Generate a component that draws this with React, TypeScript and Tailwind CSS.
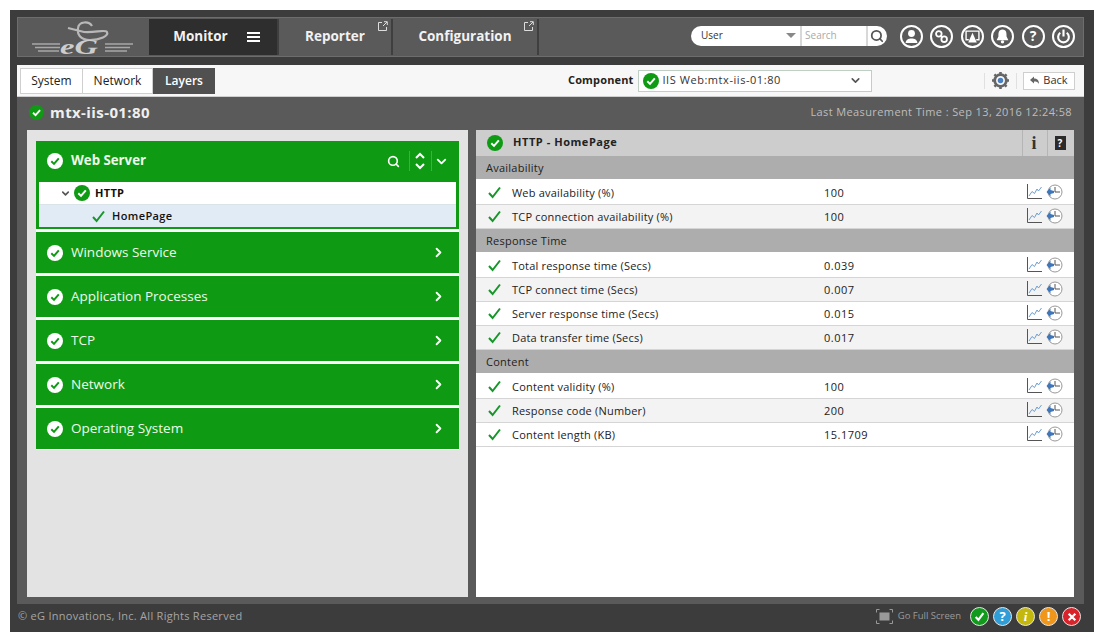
import { ChevronDown, ChevronRight, Search } from "lucide-react";

const font = "font-['Open_Sans','Noto_Sans',sans-serif]";

function CheckCircle({ size = 16, bg = "#0f9a14", fg = "#fff" }: { size?: number; bg?: string; fg?: string }) {
  return (
    <svg width={size} height={size} viewBox="0 0 16 16" className="shrink-0">
      <circle cx="8" cy="8" r="8" fill={bg} />
      <path d="M4.3 8.3 L7 10.9 L11.8 5.4" fill="none" stroke={fg} strokeWidth="2" />
    </svg>
  );
}

function Tick() {
  return (
    <svg width="13" height="13" viewBox="0 0 13 13" className="shrink-0">
      <path d="M1 7 L4.6 11 L12 1.5" fill="none" stroke="#16962a" strokeWidth="2" />
    </svg>
  );
}

function PopOut() {
  return (
    <svg width="10" height="10" viewBox="0 0 10 10" className="absolute right-[3px] top-[2px]">
      <path d="M4 1.5 H0.5 V9.5 H8.5 V6" fill="none" stroke="#ddd" strokeWidth="1" />
      <path d="M5 5 L9 1 M6 0.7 H9.3 V4" fill="none" stroke="#ddd" strokeWidth="1" />
    </svg>
  );
}

function Logo() {
  return (
    <div className="relative w-[131px] h-full shrink-0">
      <svg width="131" height="38" viewBox="0 0 131 38" className="absolute left-0 top-0">
        <path d="M14 25 H42 M17 28.5 H42 M20 32 H41 M87 25 H115 M87 28.5 H112 M87 32 H109" stroke="#a8a8a8" strokeWidth="1.3" />
        <path d="M74 7 C71 2 61 2 60 9 C59 15 62 21 72 21 C82 21 91 17 89 13 C87 10 77 14 66 13 L50 9" fill="none" stroke="#b8b8b8" strokeWidth="2.2" />
      </svg>
      <span className="absolute left-[42px] top-[20px] origin-left scale-x-[1.55] font-['Liberation_Serif',serif] italic font-bold text-[21px] leading-[17px] text-[#cdcdcd]">eG</span>
    </div>
  );
}

function TopTab({ label, active, pop, w }: { label: string; active?: boolean; pop?: boolean; w: string }) {
  return (
    <div className={`relative h-full flex items-center justify-center border-r-2 border-[#3f3f3f] pb-[1px] ${w} ${active ? "bg-[#2e2e2e] pl-[7px]" : ""}`}>
      <span className="text-[13.5px] font-bold text-[#f2f2f2]">{label}</span>
      {active && (
        <span className="ml-[19px] flex flex-col gap-[2px]">
          <span className="block w-[13px] h-[2px] bg-white" />
          <span className="block w-[13px] h-[2px] bg-white" />
          <span className="block w-[13px] h-[2px] bg-white" />
        </span>
      )}
      {pop && <PopOut />}
    </div>
  );
}

function RoundIcon({ children }: { children: React.ReactNode }) {
  return (
    <div className="w-[23px] h-[23px] rounded-full border-2 border-white flex items-center justify-center shrink-0">
      <svg width="15" height="15" viewBox="0 0 14 14">{children}</svg>
    </div>
  );
}

function Accordion({ label }: { label: string }) {
  return (
    <div className="h-[41px] bg-[#0f9a14] flex items-center pl-[11px] pr-[13px]">
      <CheckCircle bg="#fff" fg="#0f9a14" />
      <span className="ml-[8px] text-[13.5px] font-medium text-[#eefbe9] flex-1">{label}</span>
      <ChevronRight size={15} strokeWidth={3} className="text-white" />
    </div>
  );
}

function Metric({ label, value, alt }: { label: string; value: string; alt?: boolean }) {
  return (
    <div className={`h-[24px] flex items-center border-b border-[#d5d5d5] pl-[12px] pr-[11px] text-[11px] text-[#222] ${alt ? "bg-[#f3f3f3]" : "bg-white"}`}>
      <Tick />
      <span className="ml-[11px] pt-[1px] w-[312px] tracking-[0.2px]">{label}</span>
      <span className="flex-1 pt-[1px] tracking-[0.5px]">{value}</span>
      <div className="flex items-center -mt-[2px]">
        <svg width="15" height="15" viewBox="0 0 15 15" className="shrink-0">
          <path d="M0.5 0 V14.5 H15" fill="none" stroke="#555" strokeWidth="1" />
          <path d="M2 12 L5 7.5 L7.5 9.5 L10 5 L11.5 7 L14.5 3" fill="none" stroke="#6f9ed0" strokeWidth="1" />
        </svg>
        <svg width="17" height="16" viewBox="0 0 17 16" className="ml-[4px] shrink-0">
          <circle cx="9" cy="8" r="7" fill="#fff" stroke="#999" strokeWidth="1" />
          <path d="M9 3 V8 H14" fill="none" stroke="#555" strokeWidth="1" />
          <path d="M0.5 8 L4.5 3.5 V6 L8 7 V9 L4.5 10 V12.5 Z" fill="#3f76ba" />
        </svg>
      </div>
    </div>
  );
}

function Section({ label }: { label: string }) {
  return (
    <div className="h-[25px] bg-[#adadad] border-b-2 border-white flex items-center pt-[2px] pl-[10px] text-[11px] text-[#222] tracking-[0.25px]">
      {label}
    </div>
  );
}

function StatusDot({ bg, children }: { bg: string; children: React.ReactNode }) {
  return (
    <span className={`w-[19px] h-[19px] rounded-full border border-[#e8e8e8] flex items-center justify-center text-[13px] font-bold text-white ${bg}`}>
      {children}
    </span>
  );
}

export default function App() {
  return (
    <div className={`w-[1103px] h-[642px] bg-white pl-[10px] pr-[9px] pt-[10px] pb-[10px] ${font}`}>
      <div className="h-full bg-[#3c3c3c] flex flex-col">
        {/* top nav */}
        <div className="mt-[7px] mx-[7px] mr-[10px] h-[40px] bg-[#5a5a5a] border border-[#6d6d6d] flex items-stretch py-[1px]">
          <Logo />
          <TopTab label="Monitor" active w="w-[130px]" />
          <TopTab label="Reporter" pop w="w-[114px]" />
          <TopTab label="Configuration" pop w="w-[146px]" />
          <div className="flex-1 flex items-center justify-end pr-[8px] pb-[2px]">
            <div className="w-[196px] h-[20px] -mt-[1px] bg-white rounded-full flex items-center text-[10px]">
              <span className="ml-[10px] flex-1 text-[#333]">User</span>
              <span className="w-0 h-0 border-x-[5px] border-x-transparent border-t-[5px] border-t-[#888] mr-[4px]" />
              <span className="w-[68px] h-full border-x-2 border-[#d8d8d8] pl-[3px] leading-[19px] text-[#aaa]">Search</span>
              <Search size={14} strokeWidth={3} className="ml-[2px] mr-[3px] text-[#555]" />
            </div>
            <div className="ml-[13px] flex gap-[7.4px]">
              <RoundIcon>
                <circle cx="7" cy="4.2" r="3.2" fill="#fff" />
                <path d="M1.5 13 C1.5 7.5 12.5 7.5 12.5 13 Z" fill="#fff" />
              </RoundIcon>
              <RoundIcon>
                <circle cx="4.5" cy="4.5" r="2.6" fill="none" stroke="#fff" strokeWidth="1.7" />
                <circle cx="9.5" cy="9.5" r="2.6" fill="none" stroke="#fff" strokeWidth="1.7" />
                <path d="M6 6 L8 8" stroke="#fff" strokeWidth="1.7" />
              </RoundIcon>
              <RoundIcon>
                <path d="M3.5 10 H1 V2 H13 V10 H10.5" fill="none" stroke="#fff" strokeWidth="1.3" />
                <path d="M7 3.5 L11 12.5 H3 Z" fill="#fff" />
              </RoundIcon>
              <RoundIcon>
                <path d="M7 0.5 C3.2 0.5 3.2 4 3.2 7 L1.5 10.5 H12.5 L10.8 7 C10.8 4 10.8 0.5 7 0.5 Z" fill="#fff" />
                <circle cx="7" cy="12" r="1.6" fill="#fff" />
              </RoundIcon>
              <div className="w-[23px] h-[23px] rounded-full border-2 border-white flex items-center justify-center text-[14px] font-bold text-white leading-none">?</div>
              <RoundIcon>
                <path d="M4 3.5 A5 5 0 1 0 10 3.5" fill="none" stroke="#fff" strokeWidth="2" />
                <path d="M7 0.5 V7" stroke="#fff" strokeWidth="2" />
              </RoundIcon>
            </div>
          </div>
        </div>

        {/* tab bar */}
        <div className="mt-[8px] mx-[7px] mr-[10px] h-[32px] bg-[#f7f7f7] flex items-center pl-[3px] pr-[9px] border-b border-[#cfcfcf]">
          <div className="flex h-[26px] text-[12px]">
            <span className="w-[63px] border border-[#cfcfcf] bg-white flex items-center justify-center text-[#222]">System</span>
            <span className="w-[70px] border-y border-r border-[#cfcfcf] bg-white flex items-center justify-center text-[#222]">Network</span>
            <span className="w-[62px] bg-[#505050] flex items-center justify-center font-semibold text-white">Layers</span>
          </div>
          <span className="ml-[353px] text-[11px] font-bold text-[#222] tracking-[0.15px]">Component</span>
          <div className="ml-[5px] w-[234px] h-[22px] bg-white border border-[#bfcfc4] flex items-center pl-[4px] pr-[9px] text-[11px] text-[#333]">
            <CheckCircle />
            <span className="ml-[3px] flex-1 tracking-[0.55px]">IIS Web:mtx-iis-01:80</span>
            <ChevronDown size={13} strokeWidth={3} className="text-[#555]" />
          </div>
          <div className="ml-auto flex items-center">
            <div className="h-[16px] w-[33px] border-x border-[#e0e0e0] flex items-center justify-center">
              <svg width="17" height="17" viewBox="0 0 16 16">
                <circle cx="8" cy="8" r="5.5" fill="none" stroke="#666" strokeWidth="2.6" />
                <path d="M8 0 V3 M8 13 V16 M0 8 H3 M13 8 H16 M2.3 2.3 L4.4 4.4 M11.6 11.6 L13.7 13.7 M2.3 13.7 L4.4 11.6 M11.6 4.4 L13.7 2.3" stroke="#666" strokeWidth="2.4" />
                <circle cx="8" cy="8" r="2.6" fill="#4a7fc0" />
              </svg>
            </div>
            <div className="ml-[6px] w-[52px] h-[18px] bg-white border border-[#cfcfcf] flex items-center justify-center gap-[4px] text-[11px] text-[#333]">
              <svg width="9" height="9" viewBox="0 0 9 9"><path d="M0 4 L4 0.5 V2.5 C7 2.5 9 4 9 8 C8 6 6.5 5.5 4 5.5 V7.5 Z" fill="#666" /></svg>
              Back
            </div>
          </div>
        </div>

        {/* main */}
        <div className="mx-[7px] mr-[10px] h-[507px] bg-[#5a5a5a] px-[10px] flex flex-col">
          <div className="h-[33px] flex items-center justify-between pl-[2px] pr-[2px] pb-[2px]">
            <div className="flex items-center gap-[6px]">
              <CheckCircle size={15} />
              <span className="text-[15px] font-bold text-[#efefef] tracking-[0.4px]">mtx-iis-01:80</span>
            </div>
            <span className="text-[11px] text-[#bdbdbd] tracking-[0.39px]">Last Measurement Time : Sep 13, 2016 12:24:58</span>
          </div>
          <div className="h-[467px] flex gap-[8px]">
            {/* left panel */}
            <div className="w-[441px] bg-[#e3e3e3] px-[9px] pt-[11px]">
              <div className="bg-white flex flex-col gap-[3px] pb-[1px]">
                <div className="bg-[#0f9a14] px-[3px] pb-[2px]">
                  <div className="h-[41px] flex items-center pl-[8px] pr-[7px] pb-[1px]">
                    <CheckCircle bg="#fff" fg="#0f9a14" />
                    <span className="ml-[8px] text-[13.25px] font-bold text-[#eefbe9] flex-1">Web Server</span>
                    <Search size={13} strokeWidth={3} className="text-white" />
                    <span className="ml-[9px] h-[20px] border-l border-[#3fae43]" />
                    <svg width="12" height="18" viewBox="0 0 12 18" className="ml-[4px]">
                      <path d="M2 6 L6 2 L10 6 M2 12 L6 16 L10 12" fill="none" stroke="#fff" strokeWidth="2" />
                    </svg>
                    <span className="ml-[5px] h-[20px] border-l border-[#3fae43]" />
                    <ChevronDown size={15} strokeWidth={3} className="ml-[2px] text-white" />
                  </div>
                  <div className="bg-white">
                    <div className="h-[23px] flex items-center pl-[21px] border-b border-[#dbe3ea]">
                      <ChevronDown size={11} strokeWidth={3.5} className="text-[#555]" />
                      <span className="ml-[3px]"><CheckCircle size={16} /></span>
                      <span className="ml-[5px] text-[11px] font-bold text-[#111] tracking-[0.3px]">HTTP</span>
                    </div>
                    <div className="h-[22px] bg-[#e0ebf5] flex items-center pl-[53px]">
                      <Tick />
                      <span className="ml-[7px] text-[11px] font-semibold text-[#111] tracking-[0.4px]">HomePage</span>
                    </div>
                  </div>
                </div>
                <Accordion label="Windows Service" />
                <Accordion label="Application Processes" />
                <Accordion label="TCP" />
                <Accordion label="Network" />
                <Accordion label="Operating System" />
              </div>
            </div>

            {/* right panel */}
            <div className="flex-1 bg-white">
              <div className="h-[26px] bg-[#cdcdcd] flex items-center pl-[11px]">
                <CheckCircle />
                <span className="ml-[10px] pb-[1px] flex-1 text-[11px] font-bold text-[#222] tracking-[0.55px]">HTTP - HomePage</span>
                <div className="w-[25px] h-full border-l border-[#b5b5b5] flex items-center justify-center pr-[2px] font-['Liberation_Serif',serif] text-[18px] font-bold text-[#333]">i</div>
                <div className="w-[27px] h-full border-l border-[#b5b5b5] flex items-center justify-center pr-[2px]">
                  <span className="w-[11px] h-[14px] bg-[#2b2b2b] text-white text-[10px] font-bold leading-[14px] text-center">?</span>
                </div>
              </div>
              <Section label="Availability" />
              <Metric label="Web availability (%)" value="100" />
              <Metric label="TCP connection availability (%)" value="100" alt />
              <Section label="Response Time" />
              <Metric label="Total response time (Secs)" value="0.039" />
              <Metric label="TCP connect time (Secs)" value="0.007" alt />
              <Metric label="Server response time (Secs)" value="0.015" />
              <Metric label="Data transfer time (Secs)" value="0.017" alt />
              <Section label="Content" />
              <Metric label="Content validity (%)" value="100" />
              <Metric label="Response code (Number)" value="200" alt />
              <Metric label="Content length (KB)" value="15.1709" />
            </div>
          </div>
        </div>

        {/* footer */}
        <div className="flex-1 flex items-center pl-[8px] pr-[13px] pb-[3px]">
          <span className="text-[11px] text-[#a5a5a5] tracking-[0.28px]">© eG Innovations, Inc. All Rights Reserved</span>
          <div className="ml-auto flex items-center">
            <svg width="17" height="15" viewBox="0 0 17 15">
              <path d="M3.5 0.5 H0.5 V3.5 M13.5 0.5 H16.5 V3.5 M3.5 14.5 H0.5 V11.5 M13.5 14.5 H16.5 V11.5" fill="none" stroke="#9a9a9a" strokeWidth="1" />
              <rect x="3.5" y="3.5" width="10" height="8" fill="#9a9a9a" />
            </svg>
            <span className="ml-[5px] text-[9.5px] text-[#9a9a9a]">Go Full Screen</span>
            <div className="ml-[9px] flex gap-[4px]">
              <StatusDot bg="bg-[#119a1c]">
                <svg width="11" height="11" viewBox="0 0 10 10"><path d="M1.5 5.5 L4 8 L8.5 2" fill="none" stroke="#fff" strokeWidth="2" /></svg>
              </StatusDot>
              <StatusDot bg="bg-[#2f9ed8]">?</StatusDot>
              <StatusDot bg="bg-[#c4b80f]"><span className="font-['Liberation_Serif',serif] italic">i</span></StatusDot>
              <StatusDot bg="bg-[#f0961a]">!</StatusDot>
              <StatusDot bg="bg-[#d8232a]">
                <svg width="10" height="10" viewBox="0 0 9 9"><path d="M1.5 1.5 L7.5 7.5 M7.5 1.5 L1.5 7.5" stroke="#fff" strokeWidth="2" /></svg>
              </StatusDot>
            </div>
          </div>
        </div>
      </div>
    </div>
  );
}
